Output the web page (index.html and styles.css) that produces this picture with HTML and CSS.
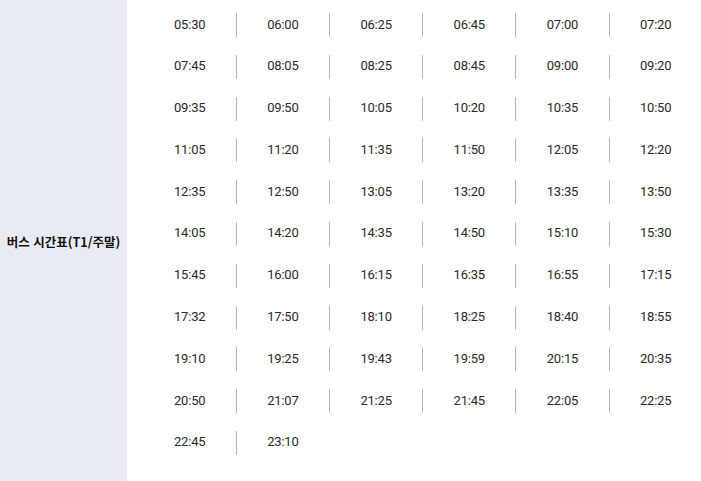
FILE: index.html
```html
<!DOCTYPE html>
<html lang="ko">
<head>
<meta charset="utf-8">
<link rel="stylesheet" href="styles.css">
</head>
<body>
<div class="table">
  <div class="label">버스 시간표(T1/주말)</div>
  <div class="times">
    <span>05:30</span><span>06:00</span><span>06:25</span><span>06:45</span><span>07:00</span><span>07:20</span>
    <span>07:45</span><span>08:05</span><span>08:25</span><span>08:45</span><span>09:00</span><span>09:20</span>
    <span>09:35</span><span>09:50</span><span>10:05</span><span>10:20</span><span>10:35</span><span>10:50</span>
    <span>11:05</span><span>11:20</span><span>11:35</span><span>11:50</span><span>12:05</span><span>12:20</span>
    <span>12:35</span><span>12:50</span><span>13:05</span><span>13:20</span><span>13:35</span><span>13:50</span>
    <span>14:05</span><span>14:20</span><span>14:35</span><span>14:50</span><span>15:10</span><span>15:30</span>
    <span>15:45</span><span>16:00</span><span>16:15</span><span>16:35</span><span>16:55</span><span>17:15</span>
    <span>17:32</span><span>17:50</span><span>18:10</span><span>18:25</span><span>18:40</span><span>18:55</span>
    <span>19:10</span><span>19:25</span><span>19:43</span><span>19:59</span><span>20:15</span><span>20:35</span>
    <span>20:50</span><span>21:07</span><span>21:25</span><span>21:45</span><span>22:05</span><span>22:25</span>
    <span>22:45</span><span>23:10</span>
  </div>
</div>
</body>
</html>
```
FILE: styles.css
```css
html, body {
  margin: 0;
  padding: 0;
  background: #ffffff;
}
.table {
  display: flex;
  min-height: 481px;
}
.label {
  width: 127px;
  flex: none;
  background: #e8ebf3;
  display: flex;
  align-items: center;
  justify-content: center;
  font-family: "Noto Sans CJK KR", "Noto Sans", sans-serif;
  font-weight: 700;
  font-size: 12.5px;
  color: #111;
  padding-top: 2px;
  box-sizing: border-box;
}
.times {
  flex: 1;
  display: grid;
  grid-template-columns: repeat(6, 93.2px);
  grid-auto-rows: 41.8px;
  align-content: start;
  padding: 13px 0 0 15.6px;
}
.times span {
  height: 24px;
  box-sizing: border-box;
  padding-bottom: 2px;
  display: flex;
  align-items: center;
  justify-content: center;
  font-family: Roboto, "Liberation Sans", sans-serif;
  font-size: 13px;
  color: #2a2a2a;
  border-left: 1px solid #b5b5b5;
  letter-spacing: -0.2px;
}
.times span:nth-child(6n+1) {
  border-left-color: transparent;
}
```
